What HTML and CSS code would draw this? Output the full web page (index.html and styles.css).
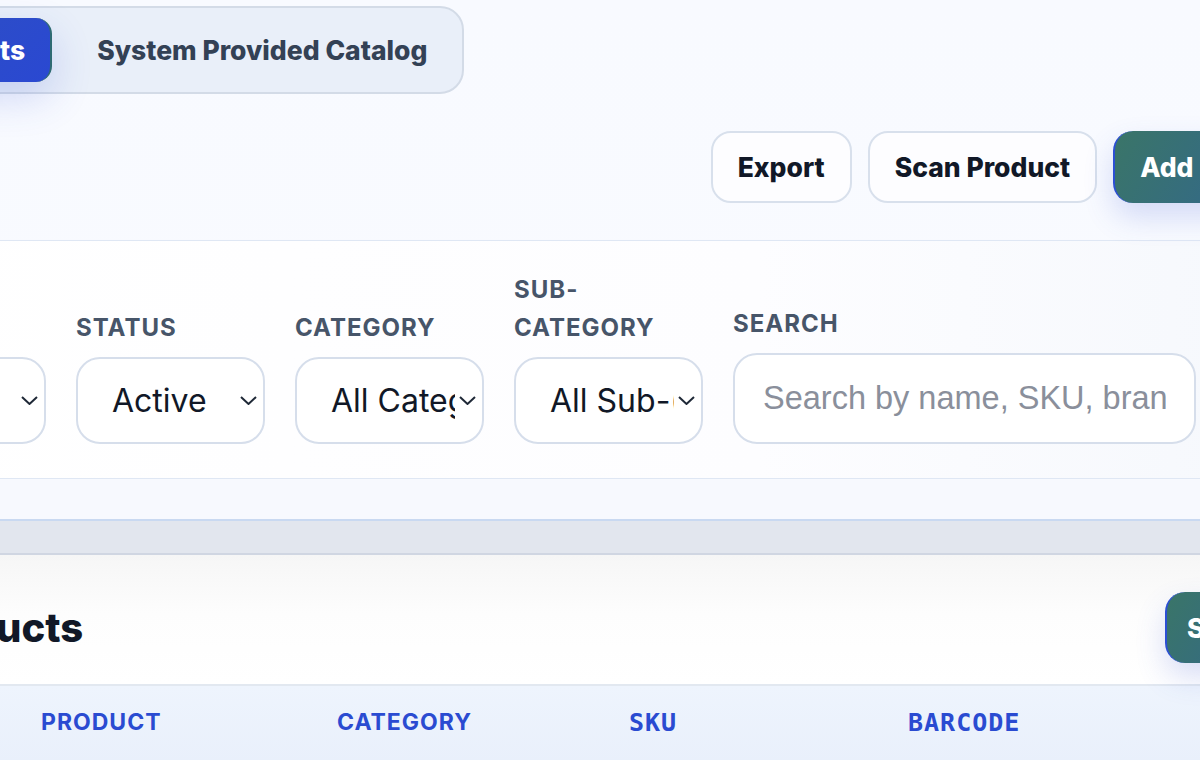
FILE: index.html
```html
<!DOCTYPE html>
<html lang="en">
  <head>
    <meta charset="UTF-8" />
    <meta name="viewport" content="width=device-width, initial-scale=1.0" />
    <title>Products</title>
    <link rel="stylesheet" href="styles.css">
  </head>
  <body>
    <div class="page">
      <div class="tabs">
        <button class="tab tab-active">My Products</button>
        <button class="tab">System Provided Catalog</button>
      </div>

      <div class="toolbar">
        <div class="actions">
          <button class="btn">Export</button>
          <button class="btn">Scan Product</button>
          <button class="btn btn-primary">Add Product</button>
        </div>
      </div>

      <div class="filters">
        <div class="field">
          <label>Type</label>
          <div class="select-wrap">
            <select><option>All</option></select>
            <svg class="chevron" width="17" height="9" viewBox="0 0 17 9"><path d="M1 1l7.5 7L16 1" /></svg>
          </div>
        </div>
        <div class="field">
          <label>Status</label>
          <div class="select-wrap">
            <select><option>Active</option><option>Inactive</option></select>
            <svg class="chevron" width="17" height="9" viewBox="0 0 17 9"><path d="M1 1l7.5 7L16 1" /></svg>
          </div>
        </div>
        <div class="field">
          <label>Category</label>
          <div class="select-wrap">
            <select><option>All Categories</option></select>
            <svg class="chevron" width="17" height="9" viewBox="0 0 17 9"><path d="M1 1l7.5 7L16 1" /></svg>
          </div>
        </div>
        <div class="field">
          <label>Sub-category</label>
          <div class="select-wrap">
            <select><option>All Sub-(Categories)</option></select>
            <svg class="chevron" width="17" height="9" viewBox="0 0 17 9"><path d="M1 1l7.5 7L16 1" /></svg>
          </div>
        </div>
        <div class="field">
          <label>Search</label>
          <input type="text" class="search" placeholder="Search by name, SKU, brand..." />
        </div>
      </div>
      <div class="filters-foot"></div>
      <div class="divider"></div>

      <section class="products">
        <div class="products-head">
          <h2>Products</h2>
          <button class="btn btn-primary btn-small">Select All</button>
        </div>
        <div class="table-head">
          <span>Product</span>
          <span>Category</span>
          <span class="mono">SKU</span>
          <span class="mono">Barcode</span>
          <span>Price</span>
        </div>
      </section>
    </div>
  </body>
</html>
```

FILE: styles.css
```css
body {
  margin: 0;
  overflow: hidden;
  background: #f8faff;
  font-family: Inter, "Noto Sans", sans-serif;
  color: #111827;
}

.page {
  margin-left: -180px;
  width: 1560px;
  padding-top: 6px;
  background: linear-gradient(180deg, #f8faff 0%, #f9fbff 100%);
}

/* tab switcher */
.tabs {
  display: inline-flex;
  gap: 20px;
  margin-left: 2px;
  padding: 10px;
  background: #e9eff9;
  border: 2px solid #d3dbe7;
  border-radius: 24px;
}

.tab {
  height: 64px;
  padding: 0 25px;
  border: none;
  border-radius: 16px;
  background: none;
  font-family: inherit;
  font-size: 26.5px;
  font-weight: 800;
  color: #334155;
  cursor: pointer;
}

.tab-active {
  color: #fff;
  background: linear-gradient(135deg, #2f52bd 0%, #2a48d2 100%);
  border-right: 2px solid #2f6b73;
  box-shadow: 0 16px 40px rgba(48, 78, 210, 0.2);
}

/* toolbar buttons */
.toolbar {
  display: flex;
  justify-content: flex-end;
  padding: 37px 52px 37px 0;
  border-bottom: 1px solid #dfe7f4;
}

.actions {
  display: flex;
  gap: 16px;
}

.btn {
  height: 72px;
  padding: 0 25px;
  border: 2px solid #d8e0ec;
  border-radius: 20px;
  background: #fdfdff;
  font-family: inherit;
  font-size: 26.5px;
  font-weight: 800;
  color: #111827;
  white-space: nowrap;
  cursor: pointer;
}

.btn-primary {
  color: #fff;
  border: none;
  border-left: 2px solid #2c4fd4;
  background: linear-gradient(120deg, #3a7568 0%, #30629a 100%);
  box-shadow: 0 14px 30px rgba(64, 90, 210, 0.2);
}

.btn-small {
  height: 71px;
  padding: 0 20px;
}

/* filters */
.filters {
  display: grid;
  grid-template-columns: repeat(4, 189px) 463px;
  gap: 30px;
  align-items: end;
  padding: 30px 0 34px 37px;
  background: linear-gradient(90deg, #ffffff 0%, #fdfdff 60%, #f4f7fc 100%);
  border-bottom: 1px solid #dfe7f4;
}

.field label {
  display: block;
  margin-bottom: 10px;
  font-size: 24px;
  line-height: 38px;
  font-weight: 700;
  letter-spacing: 1px;
  text-transform: uppercase;
  color: #475569;
}

.select-wrap {
  position: relative;
}

.select-wrap select {
  width: 100%;
  height: 87px;
  padding: 0 27px 0 34px;
  appearance: none;
  border: 2px solid #d6deeb;
  border-radius: 24px;
  background: #fff;
  font-family: inherit;
  font-size: 32px;
  color: #111827;
}

.chevron {
  position: absolute;
  right: 8px;
  top: 39px;
  fill: none;
  stroke: #1f2937;
  stroke-width: 2;
  pointer-events: none;
}

.search {
  box-sizing: border-box;
  width: 100%;
  height: 91px;
  padding: 0 28px;
  border: 2px solid #d6deeb;
  border-radius: 24px;
  background: #fff;
  font-family: "Liberation Sans", Arial, sans-serif;
  font-size: 32.5px;
  color: #111827;
  outline: none;
}

.search::placeholder {
  color: #8a8f9b;
}

.filters-foot {
  height: 40px;
  background: #f7f9fe;
  border-bottom: 2px solid #c9d9f1;
}

.divider {
  height: 32px;
  background: #e2e6ee;
  border-bottom: 2px solid #d0d6e2;
}

/* products card */
.products {
  background: #fff;
}

.products-head {
  display: flex;
  justify-content: space-between;
  align-items: center;
  padding: 37px 49px 21px 84px;
  background: linear-gradient(180deg, #f6f6f6 0%, #fdfdfd 45%, #ffffff 100%);
  border-bottom: 2px solid #e2e8f0;
}

.products-head h2 {
  margin: 0;
  font-size: 40px;
  line-height: 71px;
  font-weight: 800;
  color: #111827;
}

.table-head {
  display: grid;
  grid-template-columns: 296px 292px 279px 300px 1fr;
  padding: 0 0 0 221px;
  height: 90px;
  align-items: center;
  background: linear-gradient(180deg, #eef4fd 0%, #e8effb 100%);
}

.table-head span {
  font-size: 23px;
  font-weight: 700;
  letter-spacing: 1px;
  text-transform: uppercase;
  color: #2a4bd1;
  margin-top: -18px;
}

.table-head .mono {
  font-family: "DejaVu Sans Mono", monospace;
  font-size: 25px;
  font-weight: 700;
  letter-spacing: 1px;
}
```
